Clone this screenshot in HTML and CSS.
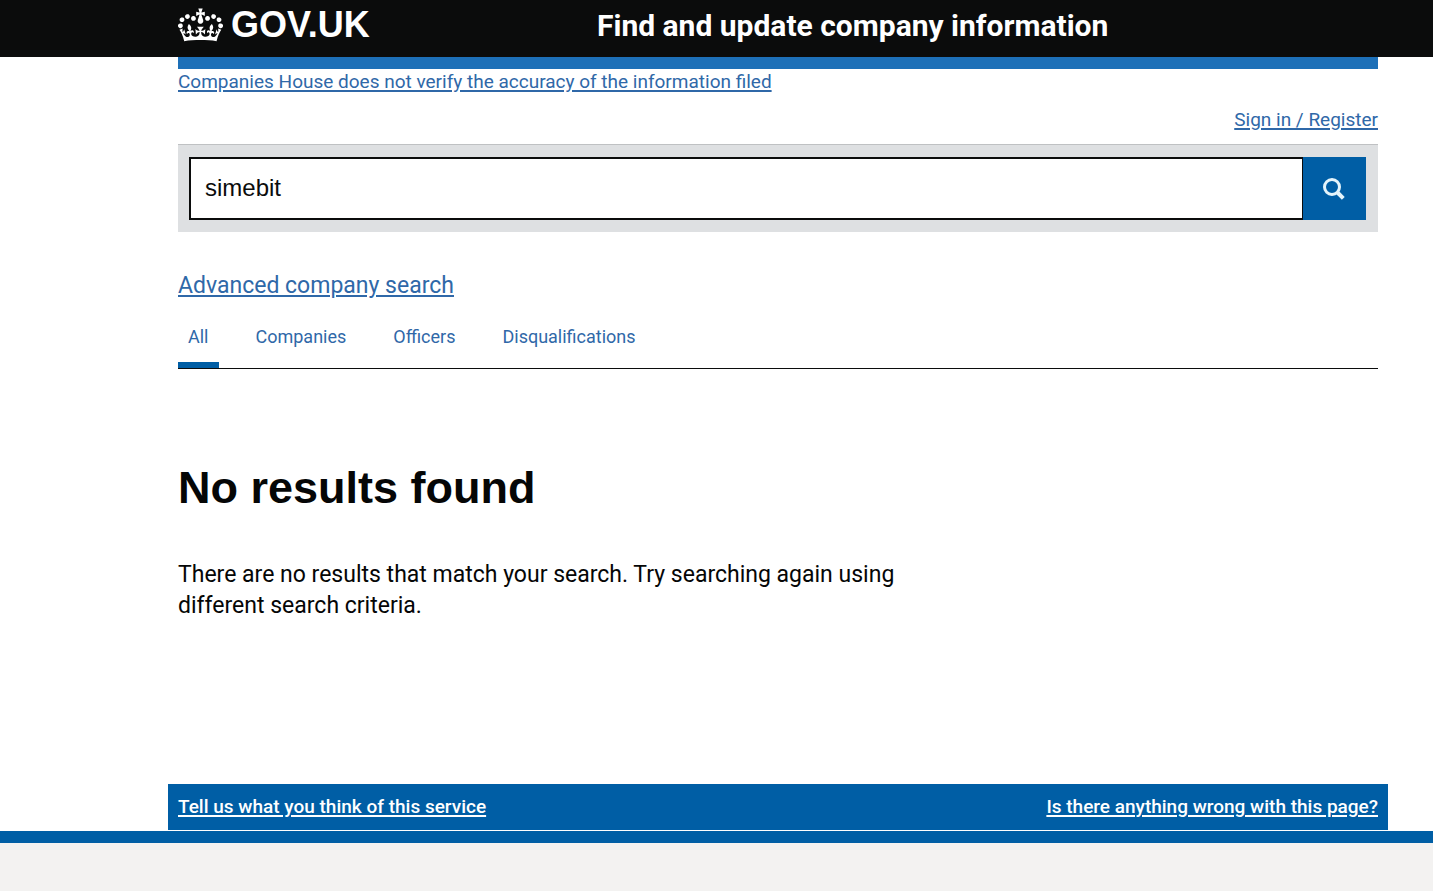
FILE: index.html
```html
<!DOCTYPE html>
<html lang="en">
<head>
    <meta charset="utf-8">
    <title>simebit - Find and update company information - GOV.UK</title>
    <meta name="viewport" content="width=device-width, initial-scale=1">
    <link rel="stylesheet" href="styles.css">
</head>
<body>
    <header class="header">
        <div class="container header-inner">
            <a class="logo" href="#">
                <svg class="crown" viewBox="0 0 132 97" aria-hidden="true">
                    <path fill="currentColor" fill-rule="evenodd" d="M25 30.2c3.5 1.5 7.7-.2 9.1-3.7 1.5-3.6-.2-7.8-3.9-9.2-3.6-1.4-7.6.3-9.1 3.9-1.4 3.5.3 7.5 3.9 9zM9 39.5c3.6 1.5 7.8-.2 9.2-3.7 1.5-3.6-.2-7.8-3.9-9.1-3.6-1.5-7.6.2-9.1 3.8-1.4 3.5.3 7.5 3.8 9zM4.4 57.2c3.5 1.5 7.7-.2 9.1-3.8 1.5-3.6-.2-7.7-3.9-9.1-3.5-1.5-7.6.3-9.1 3.8-1.4 3.5.3 7.6 3.9 9.1zm38.3-21.4c3.5 1.5 7.7-.2 9.1-3.8 1.5-3.6-.2-7.7-3.9-9.1-3.6-1.5-7.6.3-9.1 3.8-1.3 3.6.4 7.7 3.9 9.1zm64.4-5.6c-3.6 1.5-7.8-.2-9.1-3.7-1.5-3.6.2-7.8 3.8-9.2 3.6-1.4 7.7.3 9.2 3.9 1.3 3.5-.4 7.5-3.9 9zm15.9 9.3c-3.6 1.5-7.7-.2-9.1-3.7-1.5-3.6.2-7.8 3.7-9.1 3.6-1.5 7.7.2 9.2 3.8 1.5 3.5-.3 7.5-3.8 9zm4.7 17.7c-3.6 1.5-7.8-.2-9.2-3.8-1.5-3.6.2-7.7 3.9-9.1 3.6-1.5 7.7.3 9.2 3.8 1.3 3.5-.4 7.6-3.9 9.1zM89.3 35.8c-3.6 1.5-7.8-.2-9.2-3.8-1.4-3.6.2-7.7 3.9-9.1 3.6-1.5 7.7.3 9.2 3.8 1.4 3.6-.3 7.7-3.9 9.1zM69.7 17.7l8.9 4.7V9.3l-8.9 2.8c-.2-.3-.5-.6-.9-.9L72.4 0H59.6l3.5 11.2c-.3.3-.6.5-.9.9l-8.8-2.8v13.1l8.8-4.7c.3.3.6.7.9.9l-5 15.4v.1c-.2.8-.4 1.6-.4 2.4 0 4.1 3.1 7.5 7 8.1h.2c.3 0 .7.1 1 .1.4 0 .7 0 1-.1h.2c4-.6 7.1-4.1 7.1-8.1 0-.8-.1-1.7-.4-2.4V34l-5.1-15.4c.4-.2.7-.6 1-.9zM66 92.8c16.9 0 32.8 1.1 47.1 3.2 4-16.9 8.9-26.7 14-33.5l-9.6-3.4c1 4.9 1.1 7.2 0 10.2-1.5-1.4-3-4.3-4.2-8.7L108.6 76c2.8-2 5-3.2 7.5-3.3-4.4 9.4-10 11.9-13.6 11.2-4.3-.8-6.3-4.6-5.6-7.9 1-4.7 5.7-5.9 8-.5 4.3-8.7-3-11.4-7.6-8.8 7.1-7.2 7.9-13.5 2.1-21.1-8 6.1-8.1 12.3-4.5 20.8-4.7-5.4-12.1-2.5-9.5 6.2 3.4-5.2 7.9-2 7.2 3.1-.6 4.3-6.4 7.8-13.5 7.2-10.3-.9-10.9-8-11.2-13.8 2.5-.5 7.1 1.8 11 7.3L80.2 60c-4.1 4.4-8 5.3-12.3 5.4 1.4-4.4 8-11.6 8-11.6H55.5s6.4 7.2 7.9 11.6c-4.2-.1-8-1-12.3-5.4l1.4 16.4c3.9-5.5 8.5-7.7 10.9-7.3-.3 5.8-.9 12.8-11.1 13.8-7.2.6-12.9-2.9-13.5-7.2-.7-5 3.8-8.3 7.1-3.1 2.7-8.7-4.6-11.6-9.4-6.2 3.7-8.5 3.6-14.7-4.6-20.8-5.8 7.6-5 13.9 2.2 21.1-4.7-2.6-11.9.1-7.7 8.8 2.3-5.5 7.1-4.2 8.1.5.7 3.3-1.3 7.1-5.7 7.9-3.5.7-9-1.8-13.5-11.2 2.5.1 4.7 1.3 7.5 3.3l-4.7-15.4c-1.2 4.4-2.7 7.2-4.3 8.7-1.1-3-.9-5.3 0-10.2l-9.5 3.4c5 6.9 9.9 16.7 14 33.5 14.8-2.1 30.8-3.2 47.7-3.2z"/>
                </svg>
                <span class="logo-text">GOV.UK</span>
            </a>
            <a class="service-name" href="#">Find and update company information</a>
        </div>
    </header>

    <div class="container">
        <div class="header-bar"></div>
        <a class="link notice" href="#">Companies House does not verify the accuracy of the information filed</a>
        <nav class="user-nav">
            <a class="link" href="#">Sign in / Register</a>
        </nav>

        <form class="search" action="#">
            <input class="search-input" type="search" name="q" value="simebit" aria-label="Search companies or officers">
            <button class="search-button" type="submit" aria-label="Search">
                <svg class="search-icon" viewBox="0 0 22 22" aria-hidden="true">
                    <circle cx="9" cy="9" r="7.5" fill="none" stroke="currentColor" stroke-width="3"/>
                    <path d="M14 14l6.3 6.3" stroke="currentColor" stroke-width="4"/>
                </svg>
            </button>
        </form>

        <a class="link advanced" href="#">Advanced company search</a>

        <nav class="tabs">
            <a class="tab active" href="#">All</a>
            <a class="tab" href="#">Companies</a>
            <a class="tab" href="#">Officers</a>
            <a class="tab" href="#">Disqualifications</a>
        </nav>

        <main class="results">
            <h1>No results found</h1>
            <p>There are no results that match your search. Try searching again using different search criteria.</p>
        </main>

        <div class="feedback">
            <a href="#">Tell us what you think of this service</a>
            <a href="#">Is there anything wrong with this page?</a>
        </div>
    </div>

    <footer class="footer"></footer>
</body>
</html>
```
FILE: styles.css
```css
* {
    box-sizing: border-box;
}

body {
    margin: 0;
    min-height: 100vh;
    display: flex;
    flex-direction: column;
    background: #fff;
    color: #050606;
    font-family: Roboto, "Liberation Sans", sans-serif;
    font-size: 19px;
    line-height: 25px;
}

.container {
    margin-left: 178px;
    margin-right: 55px;
}

/* header */
.header {
    height: 57px;
    background: #0b0c0c;
}

.header-inner {
    display: grid;
    grid-template-columns: 419px 1fr;
    align-items: start;
}

.header a {
    color: #fff;
    text-decoration: none;
    font-weight: 700;
    white-space: nowrap;
}

.logo {
    display: flex;
    align-items: center;
    gap: 8px;
}

.crown {
    width: 45px;
    height: 34px;
}

.logo-text {
    font-family: "Liberation Sans", Arial, sans-serif;
    font-size: 36px;
    line-height: 49px;
}

.service-name {
    font-size: 30px;
    line-height: 52px;
}

.header-bar {
    height: 12px;
    background: #1d70b8;
}

/* links */
.link {
    color: #2f68a8;
    text-underline-offset: 2px;
    text-decoration-thickness: 2px;
}

.notice {
    display: block;
}

.user-nav {
    display: flex;
    justify-content: flex-end;
    margin-top: 13px;
}

/* search box */
.search {
    display: flex;
    margin-top: 12px;
    padding: 12px 12px 12px 11px;
    background: #dee0e2;
    border-top: 1px solid #bfc1c3;
}

.search-input {
    flex: 1;
    min-width: 0;
    height: 63px;
    padding: 0 14px 2px;
    border: 2px solid #0b0c0c;
    border-right-width: 1px;
    border-radius: 0;
    background: #fff;
    color: #0b0c0c;
    font-family: "Liberation Sans", Arial, sans-serif;
    font-size: 24px;
    appearance: none;
}

.search-button {
    display: flex;
    align-items: center;
    justify-content: center;
    width: 63px;
    height: 63px;
    padding: 0 2px 0 0;
    border: 0;
    background: #005ea5;
    color: #e4f4fb;
    cursor: pointer;
}

.search-icon {
    width: 22px;
    height: 22px;
}

.advanced {
    display: inline-block;
    margin-top: 38px;
    font-size: 23px;
    line-height: 31px;
}

/* tabs */
.tabs {
    display: flex;
    gap: 27px;
    margin-top: 23px;
    border-bottom: 1px solid #0b0c0c;
}

.tab {
    padding: 0 10px 13px;
    border-bottom: 6px solid transparent;
    color: #2f68a8;
    font-size: 18px;
    text-decoration: none;
}

.tab.active {
    border-bottom-color: #005ea5;
}

/* results */
.results {
    max-width: 740px;
    padding: 94px 0 163px;
}

.results h1 {
    margin: 0 0 46px;
    font-family: "Liberation Sans", Arial, sans-serif;
    font-size: 45px;
    line-height: 50px;
}

.results p {
    margin: 0;
    font-size: 23px;
    line-height: 31px;
}

/* feedback bar sticks out 10px either side of the content */
.feedback {
    display: flex;
    justify-content: space-between;
    margin: 0 -10px 1px;
    padding: 10px 10px 11px;
    background: #005ea5;
}

.feedback a {
    color: #fff;
    font-weight: 500;
    text-underline-offset: 2px;
    text-decoration-thickness: 2px;
}

.footer {
    flex: 1;
    border-top: 12px solid #005ea5;
    background: #f3f2f1;
}
```
